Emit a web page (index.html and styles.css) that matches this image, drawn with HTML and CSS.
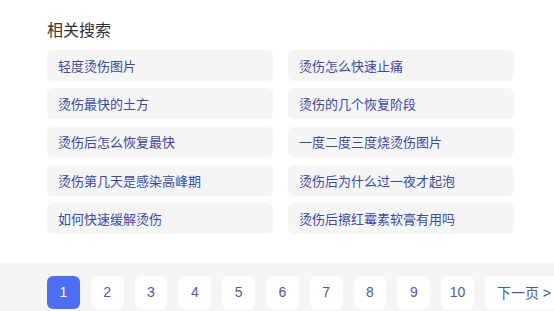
FILE: index.html
```html
<!DOCTYPE html>
<html lang="zh-CN">
<head>
  <meta charset="UTF-8" />
  <title>相关搜索</title>
  <link rel="stylesheet" href="styles.css">
</head>
<body>

  <div class="related">
    <h3 class="related-title">相关搜索</h3>
    <div class="related-grid">
      <a class="related-item" href="#">轻度烫伤图片</a>
      <a class="related-item" href="#">烫伤怎么快速止痛</a>
      <a class="related-item" href="#">烫伤最快的土方</a>
      <a class="related-item" href="#">烫伤的几个恢复阶段</a>
      <a class="related-item" href="#">烫伤后怎么恢复最快</a>
      <a class="related-item" href="#">一度二度三度烧烫伤图片</a>
      <a class="related-item" href="#">烫伤第几天是感染高峰期</a>
      <a class="related-item" href="#">烫伤后为什么过一夜才起泡</a>
      <a class="related-item" href="#">如何快速缓解烫伤</a>
      <a class="related-item" href="#">烫伤后擦红霉素软膏有用吗</a>
    </div>
  </div>

  <div class="pager">
    <span class="page current">1</span>
    <a class="page" href="#">2</a>
    <a class="page" href="#">3</a>
    <a class="page" href="#">4</a>
    <a class="page" href="#">5</a>
    <a class="page" href="#">6</a>
    <a class="page" href="#">7</a>
    <a class="page" href="#">8</a>
    <a class="page" href="#">9</a>
    <a class="page" href="#">10</a>
    <a class="page next" href="#">下一页 &gt;</a>
  </div>

</body>
</html>
```

FILE: styles.css
```css
body {
  margin: 0;
  background: #fff;
  font-family: Arial, "Liberation Sans", "Noto Sans CJK SC", sans-serif;
  overflow: hidden;
}

a {
  text-decoration: none;
}

/* Bloc des recherches liées */
.related {
  padding: 20px 0 0 47px;
}
.related-title {
  margin: 0 0 8px;
  font-size: 16px;
  line-height: 22px;
  font-weight: normal;
  color: #333;
}
.related-grid {
  display: grid;
  grid-template-columns: 226px 226px;
  grid-auto-rows: 30.7px;
  column-gap: 15px;
  row-gap: 7.6px;
}
.related-item {
  display: flex;
  align-items: center;
  padding: 0 11px;
  background: #f5f5f6;
  border-radius: 6px;
  font-size: 13px;
  color: #3b4aa0;
  white-space: nowrap;
}

/* Pagination */
.pager {
  margin-top: 29px;
  background: #f5f5f6;
  padding: 13px 0 10px 47px;
  display: flex;
  gap: 11px;
  white-space: nowrap;
}
.page {
  flex: none;
  width: 32.8px;
  height: 33px;
  display: flex;
  justify-content: center;
  align-items: center;
  background: #fff;
  border-radius: 6px;
  font-size: 14px;
  color: #4e5a9e;
}
.page.current {
  background: #4e6ef2;
  color: #fff;
}
.page.next {
  width: auto;
  padding: 0 12px;
  justify-content: flex-start;
}
```
